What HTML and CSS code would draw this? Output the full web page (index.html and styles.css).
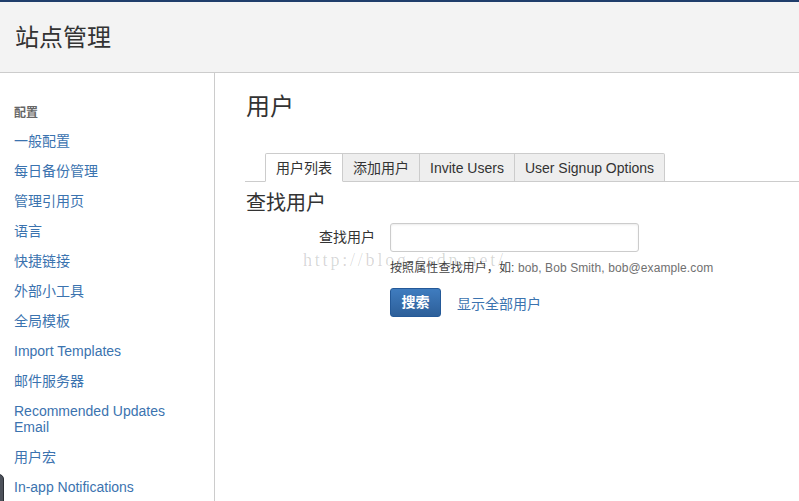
FILE: index.html
```html
<!DOCTYPE html>
<html lang="zh">
<head>
<meta charset="utf-8">
<title>站点管理</title>
<link rel="stylesheet" href="styles.css">
</head>
<body>
<div class="topbar"></div>
<header class="header">
  <h1 class="site-title">站点管理</h1>
</header>
<div class="layout">
  <nav class="sidebar">
    <div class="nav-heading">配置</div>
    <ul class="nav-list">
      <li><a href="#">一般配置</a></li>
      <li><a href="#">每日备份管理</a></li>
      <li><a href="#">管理引用页</a></li>
      <li><a href="#">语言</a></li>
      <li><a href="#">快捷链接</a></li>
      <li><a href="#">外部小工具</a></li>
      <li><a href="#">全局模板</a></li>
      <li><a href="#">Import Templates</a></li>
      <li><a href="#">邮件服务器</a></li>
      <li><a href="#">Recommended Updates Email</a></li>
      <li><a href="#">用户宏</a></li>
      <li><a href="#">In-app Notifications</a></li>
    </ul>
  </nav>
  <main class="main">
    <h2 class="page-title">用户</h2>
    <ul class="tabs">
      <li class="tab active">用户列表</li>
      <li class="tab">添加用户</li>
      <li class="tab">Invite Users</li>
      <li class="tab">User Signup Options</li>
    </ul>
    <h3 class="section-title">查找用户</h3>
    <form class="search-form">
      <div class="field-row">
        <label class="field-label" for="q">查找用户</label>
        <div class="field-body">
          <input class="text-input" id="q" type="text">
          <div class="help">按照属性查找用户，如: <span class="help-eg">bob, Bob Smith, bob@example.com</span></div>
        </div>
      </div>
      <div class="actions">
        <button class="btn-primary" type="button">搜索</button>
        <a class="show-all" href="#">显示全部用户</a>
      </div>
    </form>
    <div class="watermark">http://blog.csdn.net/</div>
  </main>
</div>
<div class="side-widget"></div>
</body>
</html>
```

FILE: styles.css
```css
* { box-sizing: border-box; }
html, body {
  margin: 0;
  padding: 0;
  background: #fff;
  font-family: "Liberation Sans", "Noto Sans CJK SC", sans-serif;
  color: #333;
  overflow: hidden;
  height: 501px;
}
.topbar {
  height: 2px;
  background: #1f3d6b;
}
.header {
  height: 71px;
  background: #f3f3f3;
  border-bottom: 1px solid #cccccc;
  display: flex;
  align-items: center;
  padding-left: 15px;
}
.site-title {
  margin: 0;
  font-size: 24px;
  font-weight: normal;
  line-height: 30px;
  color: #333;
  position: relative;
  top: 1px;
}
.layout {
  display: flex;
  height: 428px;
}
.sidebar {
  width: 215px;
  flex: none;
  border-right: 1px solid #cccccc;
  padding: 32px 0 0 14px;
}
.nav-heading {
  font-size: 12px;
  font-weight: bold;
  color: #666;
  line-height: 16px;
  margin-bottom: 5px;
}
.nav-list {
  list-style: none;
  margin: 0;
  padding: 0;
}
.nav-list li {
  padding: 7px 40px 7px 0;
  font-size: 14px;
  line-height: 16px;
}
.nav-list a {
  color: #3b73af;
  text-decoration: none;
}
.main {
  flex: 1;
  padding-left: 30px;
  position: relative;
}
.page-title {
  margin: 19px 0 0 1px;
  font-size: 24px;
  font-weight: normal;
  line-height: 30px;
  color: #333;
}
.tabs {
  list-style: none;
  margin: 31px 0 0 0;
  padding: 0 0 0 20px;
  display: flex;
  border-bottom: 1px solid #cccccc;
}
.tab {
  font-size: 14px;
  line-height: 26px;
  padding: 1px 10px 0;
  background: #eeeeee;
  border: 1px solid #cccccc;
  border-left-width: 0;
  margin-bottom: -1px;
  color: #333;
}
.tab:first-child {
  border-left-width: 1px;
  border-top-left-radius: 2px;
}
.tab:last-child {
  border-top-right-radius: 2px;
}
.tab.active {
  background: #fff;
  border-bottom-color: #fff;
}
.section-title {
  margin: 9px 0 0 1px;
  font-size: 20px;
  font-weight: normal;
  line-height: 24px;
  color: #333;
}
.search-form {
  margin-top: 8px;
}
.field-row {
  display: flex;
}
.field-label {
  width: 145px;
  padding-right: 15px;
  text-align: right;
  font-size: 14px;
  line-height: 29px;
  color: #333;
  flex: none;
}
.text-input {
  display: block;
  width: 249px;
  height: 29px;
  border: 1px solid #cccccc;
  border-radius: 3px;
  box-shadow: inset 0 1px 2px rgba(0,0,0,0.08);
  font-size: 14px;
  margin: 0;
}
.help {
  margin-top: 8px;
  font-size: 12px;
  line-height: 16px;
  color: #444;
  letter-spacing: 0.1px;
}
.help-eg {
  color: #707070;
}
.actions {
  margin: 12px 0 0 145px;
  display: flex;
  align-items: center;
  gap: 16px;
}
.btn-primary {
  width: 51px;
  height: 29px;
  padding: 0;
  border: 1px solid #245998;
  border-radius: 3px;
  background: linear-gradient(#3f7cbf, #2d5f99);
  color: #fff;
  font-family: "Liberation Sans", "Noto Sans CJK SC", sans-serif;
  font-size: 14px;
  font-weight: bold;
  line-height: 27px;
}
.show-all {
  font-size: 14px;
  color: #3b73af;
  text-decoration: none;
}
.watermark {
  position: absolute;
  left: 88px;
  top: 182px;
  height: 11px;
  line-height: 11px;
  font-family: "Liberation Serif", serif;
  font-size: 18px;
  letter-spacing: 2.8px;
  color: rgba(0,0,0,0.16);
  pointer-events: none;
  white-space: nowrap;
}
.side-widget {
  position: absolute;
  left: -6px;
  top: 474px;
  width: 10px;
  height: 40px;
  background: #4d525b;
  border: 1px solid #2b2f35;
  border-radius: 5px;
}
```
